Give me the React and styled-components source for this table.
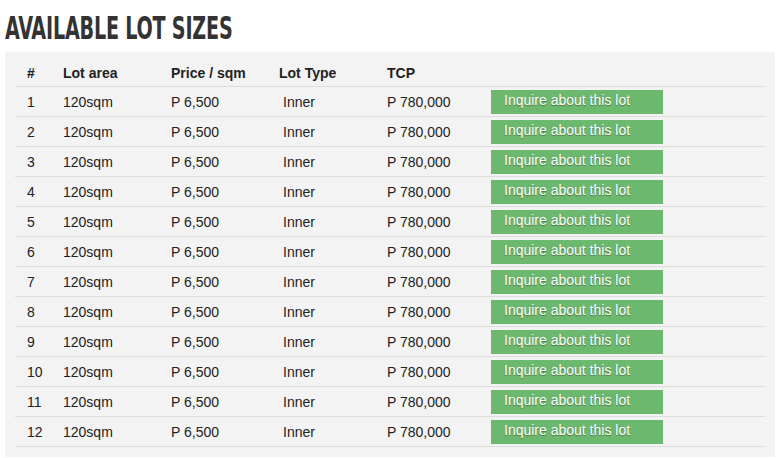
import React from "react";
import styled, { createGlobalStyle } from "styled-components";

const GlobalStyle = createGlobalStyle`
  body {
    margin: 0;
    background: #fff;
    font-family: "Liberation Sans", Arial, sans-serif;
  }
`;

const lots = Array.from({ length: 12 }, (_, i) => ({
  no: i + 1,
  area: "120sqm",
  price: "P 6,500",
  type: "Inner",
  tcp: "P 780,000",
}));

const App = () => {
  return (
    <Page>
      <GlobalStyle />
      <Title>AVAILABLE LOT SIZES</Title>
      <Panel>
        <Table>
          <HeadRow>
            <Cell>#</Cell>
            <Cell>Lot area</Cell>
            <Cell>Price / sqm</Cell>
            <Cell>Lot Type</Cell>
            <Cell>TCP</Cell>
            <Cell />
          </HeadRow>
          {lots.map((lot) => (
            <Row key={lot.no}>
              <Cell>{lot.no}</Cell>
              <Cell>{lot.area}</Cell>
              <Cell>{lot.price}</Cell>
              <Cell $indent>{lot.type}</Cell>
              <Cell>{lot.tcp}</Cell>
              <Cell>
                <InquireButton>Inquire about this lot</InquireButton>
              </Cell>
            </Row>
          ))}
        </Table>
      </Panel>
    </Page>
  );
};

const Page = styled.div`
  padding: 10px 2px 0 5px;
`;

const Title = styled.h2`
  margin: 0 0 5px 0;
  font-family: "DejaVu Sans Condensed", "DejaVu Sans", sans-serif;
  font-stretch: condensed;
  font-weight: bold;
  font-size: 32px;
  line-height: 37px;
  color: #333;
  letter-spacing: -0.3px;
  transform: scaleX(0.665);
  transform-origin: left center;
  white-space: nowrap;
`;

const Panel = styled.div`
  background: #f3f3f3;
  padding: 8px 10px 10px 10px;
`;

const Table = styled.div`
  display: flex;
  flex-direction: column;
`;

const HeadRow = styled.div`
  display: grid;
  grid-template-columns: 36px 108px 108px 108px 104px 1fr;
  align-items: center;
  height: 26px;
  border-bottom: 1px solid #ddd;
  font-weight: bold;
  font-size: 14px;
  color: #222;
`;

const Row = styled.div`
  display: grid;
  grid-template-columns: 36px 108px 108px 108px 104px 1fr;
  align-items: center;
  height: 29px;
  border-bottom: 1px solid #ddd;
  font-size: 14px;
  color: #222;
`;

const Cell = styled.div`
  padding-left: ${({ $indent }) => ($indent ? "16px" : "12px")};
  white-space: nowrap;
`;

const InquireButton = styled.button`
  display: block;
  width: 172px;
  height: 24px;
  border: none;
  background: #6db86f;
  color: #fff;
  font-family: "Liberation Sans", Arial, sans-serif;
  font-size: 14px;
  text-align: left;
  padding: 0 0 4px 13px;
  text-shadow: 0 1px 1px rgba(0, 0, 0, 0.35);
  cursor: pointer;
`;

export default App;
